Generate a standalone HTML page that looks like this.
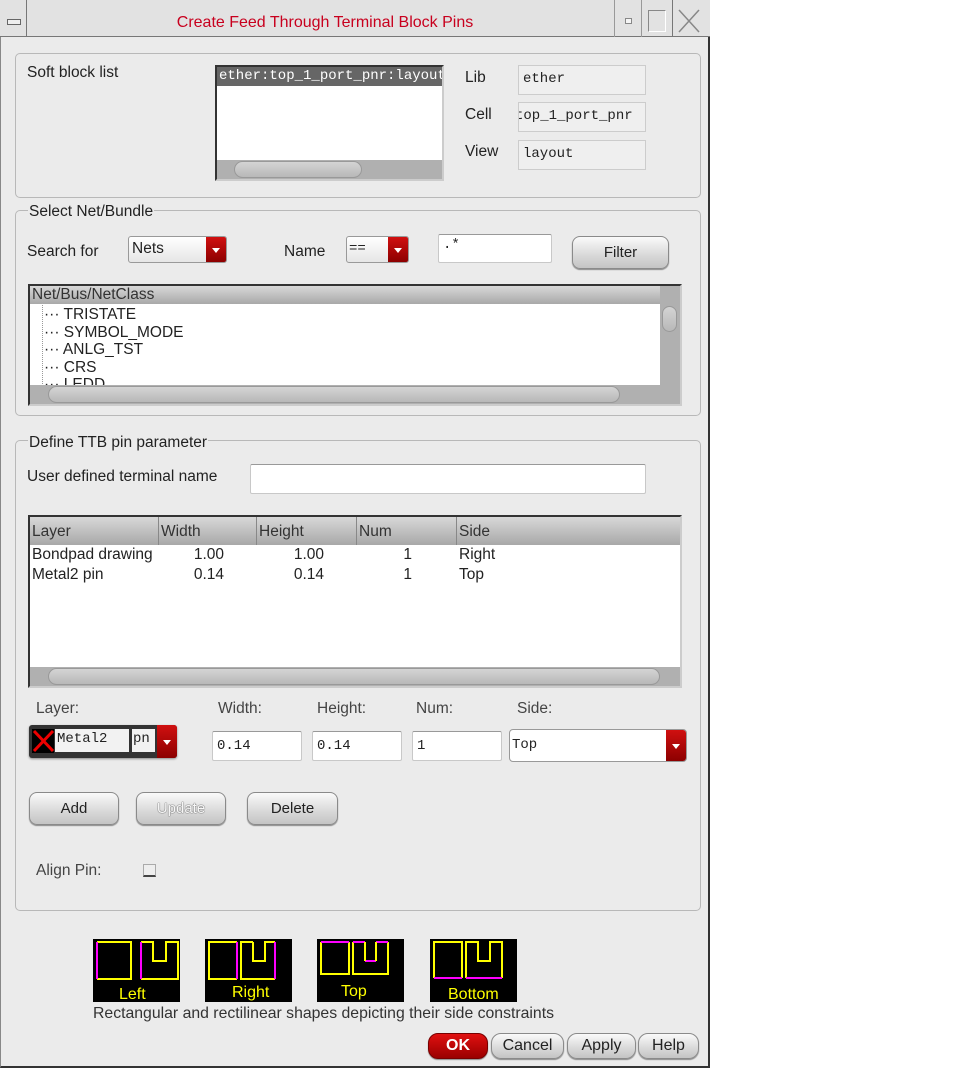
<!DOCTYPE html>
<html><head><meta charset="utf-8"><style>
*{box-sizing:border-box;margin:0;padding:0}
body{width:976px;height:1089px;background:#fff;position:relative;overflow:hidden;font-family:"Liberation Sans",sans-serif;font-size:15.5px;color:#222}
.a{position:absolute}
.win{left:0;top:0;width:710px;height:1068px;background:#ebebeb;border-right:2px solid #333;border-bottom:2px solid #333;border-left:1px solid #888}
.grp{border:1px solid #b8b8b8;border-radius:5px}
.lbl{white-space:nowrap}
.gl{background:#ebebeb;padding:0 1px}
.fld{background:#fff;border:1px solid #c8c8c8;border-top-color:#999;border-radius:2px;font-family:"Liberation Mono",monospace;font-size:14px;padding:6px 4px;white-space:nowrap;overflow:hidden}
.ro{background:#efefef;border:1px solid #ccc;font-family:"Liberation Mono",monospace;font-size:14px;padding:5px 4px;white-space:nowrap;overflow:hidden}
.btn{border:1px solid #8a8a8a;border-radius:8px;background:linear-gradient(#fafafa,#d8d8d8 60%,#c4c4c4);text-align:center;line-height:31px;font-size:15px;box-shadow:0 1px 1px #888}
.combo{background:linear-gradient(#fff,#e6e6e6);border:1px solid #999;border-radius:3px;overflow:hidden}
.dd{position:absolute;right:0;top:0;bottom:0;width:20px;background:linear-gradient(#d01010,#8c0000)}
.dd:after{content:"";position:absolute;left:6px;top:45%;border:4px solid transparent;border-top:5px solid #fff}
.list{background:#fff;border:2px solid #333;border-right-color:#ccc;border-bottom-color:#ccc}
.hsb{background:#b0b0b0;height:19px}
.thumb{position:absolute;top:1px;bottom:1px;background:linear-gradient(#d4d4d4,#b8b8b8);border-radius:9px;border:1px solid #999}
.hdr{background:linear-gradient(#d8d8d8,#a8a8a8);color:#333}
.bb{border-radius:10px;line-height:24px;font-size:16px}
.r{text-align:right;width:40px}
</style></head><body>
<div class="a win"></div>
<div class="a" style="left:0;top:0;width:710px;height:37px;background:#e2e2e2;border-bottom:1px solid #777"></div>
<div class="a" style="left:26px;top:0;width:1px;height:37px;background:#777"></div>
<div class="a" style="left:7px;top:19px;width:14px;height:6px;border:1px solid #666;background:#eee"></div>
<div class="a lbl" style="left:0;width:650px;top:14px;text-align:center;color:#c8001e;font-size:16px">Create Feed Through Terminal Block Pins</div>
<div class="a" style="left:614px;top:0;width:1px;height:37px;background:#999"></div>
<div class="a" style="left:625px;top:18px;width:7px;height:6px;border:1px solid #888;background:#f5f5f5"></div>
<div class="a" style="left:641px;top:0;width:1px;height:37px;background:#999"></div>
<div class="a" style="left:648px;top:10px;width:18px;height:22px;border:1px solid #888;border-right-color:#fff;border-bottom-color:#fff"></div>
<div class="a" style="left:672px;top:0;width:1px;height:37px;background:#777"></div>
<svg class="a" style="left:676px;top:8px" width="26" height="26"><path d="M3 2L23 24M23 2L3 24" stroke="#888" stroke-width="1.5"/></svg>

<div class="a grp" style="left:15px;top:53px;width:686px;height:145px"></div>
<div class="a lbl" style="left:27px;top:64px">Soft block list</div>
<div class="a list" style="left:215px;top:65px;width:229px;height:116px;overflow:hidden">
 <div style="background:#666;color:#fff;font-family:'Liberation Mono',monospace;font-size:14px;height:19px;line-height:19px;white-space:nowrap;padding-left:2px">ether:top_1_port_pnr:layout</div>
 <div class="a hsb" style="left:0;bottom:0;width:227px"><div class="thumb" style="left:17px;width:128px"></div></div>
</div>
<div class="a lbl" style="left:465px;top:69px">Lib</div>
<div class="a ro" style="left:518px;top:65px;width:128px;height:30px">ether</div>
<div class="a lbl" style="left:465px;top:106px">Cell</div>
<div class="a ro" style="left:518px;top:102px;width:128px;height:30px;text-indent:-8px">top_1_port_pnr</div>
<div class="a lbl" style="left:465px;top:143px">View</div>
<div class="a ro" style="left:518px;top:140px;width:128px;height:30px">layout</div>

<div class="a grp" style="left:15px;top:210px;width:686px;height:206px"></div>
<div class="a lbl gl" style="left:28px;top:203px">Select Net/Bundle</div>
<div class="a lbl" style="left:27px;top:243px">Search for</div>
<div class="a combo" style="left:128px;top:236px;width:99px;height:27px"><span style="position:absolute;left:3px;top:3px">Nets</span><div class="dd"></div></div>
<div class="a lbl" style="left:284px;top:243px">Name</div>
<div class="a combo" style="left:346px;top:236px;width:63px;height:27px"><span style="position:absolute;left:2px;top:4px;font-family:'Liberation Mono',monospace;font-size:14px">==</span><div class="dd"></div></div>
<div class="a fld" style="left:438px;top:234px;width:114px;height:29px;padding-top:2px">.*</div>
<div class="a btn" style="left:572px;top:236px;width:97px;height:33px">Filter</div>
<div class="a list" style="left:28px;top:284px;width:654px;height:122px;overflow:hidden">
 <div class="hdr" style="height:18px;line-height:18px;padding-left:2px;width:632px">Net/Bus/NetClass</div>
 <div style="position:absolute;left:12px;top:19px;bottom:0;border-left:1px dotted #999"></div>
 <div style="position:absolute;left:14px;top:20px;line-height:17.5px">
  <div>··· TRISTATE</div><div>··· SYMBOL_MODE</div><div>··· ANLG_TST</div><div>··· CRS</div><div>··· LEDD</div>
 </div>
 <div class="a" style="right:0;top:0;width:20px;height:100px;background:#b0b0b0"><div class="thumb" style="left:2px;width:15px;top:20px;height:26px"></div></div>
 <div class="a hsb" style="left:0;bottom:0;width:652px"><div class="thumb" style="left:18px;width:572px"></div></div>
</div>

<div class="a grp" style="left:15px;top:440px;width:686px;height:471px"></div>
<div class="a lbl gl" style="left:28px;top:434px">Define TTB pin parameter</div>
<div class="a lbl" style="left:27px;top:468px">User defined terminal name</div>
<div class="a fld" style="left:250px;top:464px;width:396px;height:30px"></div>
<div class="a list" style="left:28px;top:515px;width:654px;height:173px;overflow:hidden">
 <div class="hdr" style="height:28px;width:652px;position:relative">
  <span class="a" style="left:2px;top:6px">Layer</span>
  <span class="a" style="left:128px;top:0;height:28px;border-left:1px solid #888"></span><span class="a" style="left:131px;top:6px">Width</span>
  <span class="a" style="left:226px;top:0;height:28px;border-left:1px solid #888"></span><span class="a" style="left:229px;top:6px">Height</span>
  <span class="a" style="left:326px;top:0;height:28px;border-left:1px solid #888"></span><span class="a" style="left:329px;top:6px">Num</span>
  <span class="a" style="left:426px;top:0;height:28px;border-left:1px solid #888"></span><span class="a" style="left:429px;top:6px">Side</span>
 </div>
 <div class="a" style="left:2px;top:28px;line-height:20px">Bondpad drawing<br>Metal2 pin</div>
 <div class="a r" style="left:154px;top:28px;line-height:20px">1.00<br>0.14</div>
 <div class="a r" style="left:254px;top:28px;line-height:20px">1.00<br>0.14</div>
 <div class="a r" style="left:342px;top:28px;line-height:20px">1<br>1</div>
 <div class="a" style="left:429px;top:28px;line-height:20px">Right<br>Top</div>
 <div class="a hsb" style="left:0;bottom:0;width:652px"><div class="thumb" style="left:18px;width:612px"></div></div>
</div>
<div class="a lbl" style="left:36px;top:700px;color:#444">Layer:</div>
<div class="a lbl" style="left:218px;top:700px;color:#444">Width:</div>
<div class="a lbl" style="left:317px;top:700px;color:#444">Height:</div>
<div class="a lbl" style="left:416px;top:700px;color:#444">Num:</div>
<div class="a lbl" style="left:517px;top:700px;color:#444">Side:</div>
<div class="a" style="left:29px;top:725px;width:148px;height:33px;background:#333;border-radius:3px;box-shadow:0 1px 2px #888">
 <div class="a" style="left:3px;top:4px;width:22px;height:24px;background:#000"></div>
 <svg class="a" style="left:3px;top:4px" width="23" height="24"><path d="M2 2L21 22M21 2L2 22" stroke="#e00" stroke-width="3"/></svg>
 <div class="a" style="left:26px;top:4px;width:74px;height:23px;background:#f2f2f2;font-family:'Liberation Mono',monospace;font-size:14px;padding:2px 2px">Metal2</div>
 <div class="a" style="left:103px;top:4px;width:23px;height:23px;background:#f2f2f2;font-family:'Liberation Mono',monospace;font-size:14px;padding:2px 1px;overflow:hidden">pn</div>
 <div class="dd" style="width:20px;border-radius:0 3px 3px 0"></div>
</div>
<div class="a fld" style="left:212px;top:731px;width:90px;height:30px">0.14</div>
<div class="a fld" style="left:312px;top:731px;width:90px;height:30px">0.14</div>
<div class="a fld" style="left:412px;top:731px;width:90px;height:30px">1</div>
<div class="a combo" style="left:509px;top:729px;width:178px;height:33px;background:#fff;border-radius:4px"><span style="position:absolute;left:2px;top:7px;font-family:'Liberation Mono',monospace;font-size:14px">Top</span><div class="dd"></div></div>
<div class="a btn" style="left:29px;top:792px;width:90px;height:33px">Add</div>
<div class="a btn" style="left:136px;top:792px;width:90px;height:33px;color:#f8f8f8;text-shadow:0 0 1px #555,0 0 1px #555">Update</div>
<div class="a btn" style="left:247px;top:792px;width:91px;height:33px">Delete</div>
<div class="a lbl" style="left:36px;top:862px;color:#444">Align Pin:</div>
<div class="a" style="left:143px;top:864px;width:13px;height:13px;background:#eee;border:1px solid #aaa;border-bottom:2px solid #444"></div>

<svg class="a" style="left:93px;top:939px" width="430" height="64" font-family="Liberation Sans" font-size="16" fill="#ff0">
 <g fill="none" stroke-width="2">
  <rect x="0" y="0" width="87" height="63" fill="#000" stroke="none"/>
  <path d="M4 3H38V40H4" stroke="#ff0"/><path d="M4 3V40" stroke="#f0f"/>
  <path d="M48 3H60V22H73V3H85V40H48" stroke="#ff0"/><path d="M48 3V40" stroke="#f0f"/>
  <rect x="112" y="0" width="87" height="63" fill="#000" stroke="none"/>
  <path d="M144 3H116V40H144" stroke="#ff0"/><path d="M144 3V40" stroke="#f0f"/>
  <path d="M160 3H148V40H182M182 3H172V22H160V3" stroke="#ff0"/><path d="M182 3V40" stroke="#f0f"/>
  <rect x="224" y="0" width="87" height="63" fill="#000" stroke="none"/>
  <path d="M228 3V35H256V3" stroke="#ff0"/><path d="M228 3H256" stroke="#f0f"/>
  <path d="M260 3V35H295V3" stroke="#ff0"/><path d="M260 3H272M283 3H295M272 22H283" stroke="#f0f"/><path d="M272 3V22M283 3V22" stroke="#ff0"/>
  <rect x="337" y="0" width="87" height="63" fill="#000" stroke="none"/>
  <path d="M341 39V3H369V39" stroke="#ff0"/><path d="M341 39H369" stroke="#f0f"/>
  <path d="M373 39V3H385V22H397V3H409V39" stroke="#ff0"/><path d="M373 39H409" stroke="#f0f"/>
 </g>
 <text x="26" y="60">Left</text><text x="139" y="58">Right</text><text x="248" y="57">Top</text><text x="355" y="60">Bottom</text>
</svg>
<div class="a lbl" style="left:93px;top:1005px;color:#333;font-size:15.8px">Rectangular and rectilinear shapes depicting their side constraints</div>

<div class="a btn bb" style="left:428px;top:1033px;width:60px;height:26px;background:linear-gradient(#e01010,#9a0000);color:#fff;font-weight:bold;border-color:#700">OK</div>
<div class="a btn bb" style="left:491px;top:1033px;width:73px;height:26px">Cancel</div>
<div class="a btn bb" style="left:567px;top:1033px;width:69px;height:26px">Apply</div>
<div class="a btn bb" style="left:638px;top:1033px;width:61px;height:26px">Help</div>
</body></html>
